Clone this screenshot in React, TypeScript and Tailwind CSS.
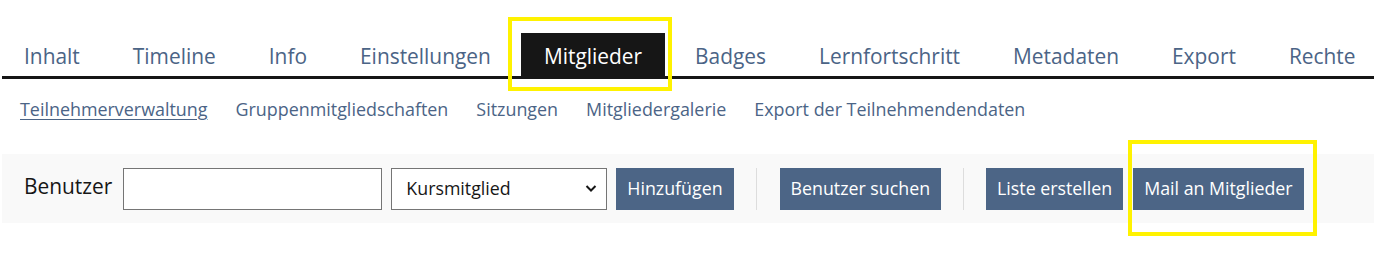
import React from 'react';

const tabs = ['Inhalt', 'Timeline', 'Info', 'Einstellungen', 'Mitglieder', 'Badges', 'Lernfortschritt', 'Metadaten', 'Export', 'Rechte'];
const subTabs = ['Teilnehmerverwaltung', 'Gruppenmitgliedschaften', 'Sitzungen', 'Mitgliedergalerie', 'Export der Teilnehmendendaten'];

export default function App() {
  return (
    <div className="relative w-[1374px] h-[267px] bg-white font-['Open_Sans',sans-serif] overflow-hidden">
      {/* Main tabs */}
      <ul className="ml-[2px] pt-[33px] flex gap-[7px] border-b-[3px] border-[#161616]">
        {tabs.map((t, i) => (
          <li
            key={t}
            className={
              'px-[23px] pt-[9px] pb-[6px] text-[20.9px] leading-[28px] whitespace-nowrap ' +
              (i === 0 ? '-ml-[1px] ' : '') +
              (t === 'Mitglieder' ? 'bg-[#161616] text-white' : 'text-[#4b6486]')
            }
          >
            {t}
          </li>
        ))}
      </ul>

      {/* Sub tabs */}
      <ul className="mt-[18px] ml-[20px] flex gap-[28px] text-[17.9px] leading-[24px] text-[#4b6486]">
        {subTabs.map((t, i) => (
          <li key={t} className={i === 0 ? 'underline underline-offset-[3px]' : ''}>
            {t}
          </li>
        ))}
      </ul>

      {/* Toolbar */}
      <div className="mt-[33px] ml-[2px] h-[69px] bg-[#f9f9f9] pl-[22px] flex items-center">
        <label className="text-[20.9px] text-[#161616] mr-[11px] -mt-[4px]">Benutzer</label>
        <input className="w-[259px] h-[42px] bg-white border border-[#757575] outline-none" />
        <div className="relative ml-[9px] w-[216px] h-[42px] bg-white border border-[#757575] flex items-center pl-[14px] text-[17.8px] text-[#161616]">
          Kursmitglied
          <svg className="absolute right-[9px] top-[15px]" width="12" height="9" viewBox="0 0 12 9" fill="none">
            <path d="M1.5 2l4.5 4.5L10.5 2" stroke="#161616" strokeWidth="2" />
          </svg>
        </div>
        <button className="ml-[9px] h-[42px] px-[11px] bg-[#4c6586] text-white text-[17.8px]">Hinzufügen</button>
        <div className="ml-[22px] w-px h-[42px] bg-[#dddddd]" />
        <button className="ml-[23px] h-[42px] px-[11px] bg-[#4c6586] text-white text-[17.8px]">Benutzer suchen</button>
        <div className="ml-[22px] w-px h-[42px] bg-[#dddddd]" />
        <button className="ml-[22px] h-[42px] px-[11px] bg-[#4c6586] text-white text-[17.8px]">Liste erstellen</button>
        <button className="ml-[10px] h-[42px] px-[11px] bg-[#4c6586] text-white text-[17.8px]">Mail an Mitglieder</button>
      </div>

      {/* Annotation highlights */}
      <div className="absolute left-[508px] top-[17px] w-[164px] h-[74px] border-[4px] border-[#fff200]" />
      <div className="absolute left-[1128px] top-[140px] w-[189px] h-[96px] border-[4px] border-[#fff200]" />
    </div>
  );
}
